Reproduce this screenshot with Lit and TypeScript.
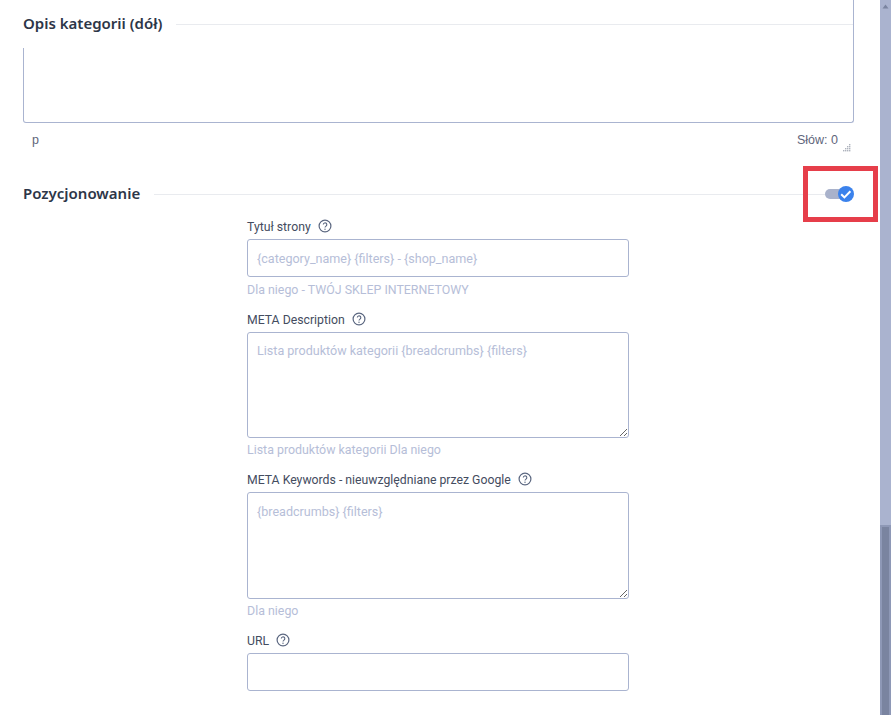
import { LitElement, html, css, svg } from "lit";
import { customElement } from "lit/decorators.js";

const help = html`<svg class="help" viewBox="0 0 14 14" width="14" height="14" aria-hidden="true">
  <circle cx="7" cy="7" r="5.9" fill="none" stroke="#5b6780" stroke-width="1.2"></circle>
  <path d="M5.3 5.6a1.75 1.75 0 1 1 2.7 1.5c-.6.4-1 .7-1 1.4" fill="none" stroke="#5b6780" stroke-width="1.1"></path>
  <circle cx="7" cy="10.2" r=".7" fill="#5b6780"></circle>
</svg>`;

@customElement("app-root")
export class AppRoot extends LitElement {
  static styles = css`
    :host {
      display: flex;
      width: 891px;
      height: 715px;
      overflow: hidden;
      position: relative;
      background: #fff;
      font-family: Roboto, "Noto Sans", sans-serif;
      color: #3d4559;
    }
    * { box-sizing: border-box; }
    .main {
      flex: 1;
      min-width: 0;
      padding: 0 26px 0 23px;
      display: flex;
      flex-direction: column;
      position: relative;
    }
    .rail {
      position: absolute;
      top: 0;
      right: 26px;
      width: 1px;
      height: 48px;
      background: #aab4d0;
    }
    .head {
      display: flex;
      align-items: center;
      gap: 14px;
      height: 20px;
      font-family: "Noto Sans", sans-serif;
      font-size: 15px;
      font-weight: 600;
      line-height: 18px;
      color: #2d3648;
      white-space: nowrap;
    }
    .head span { position: relative; top: -1px; }
    .head::after {
      content: "";
      flex: 1;
      height: 1px;
      background: #e9ebef;
    }
    .head.first { margin-top: 14px; }
    .editor {
      margin-top: 14px;
      height: 75px;
      border: 1px solid #aab4d0;
      border-top: none;
      border-radius: 0 0 3px 3px;
      background: #fff;
    }
    .status {
      display: flex;
      justify-content: space-between;
      align-items: flex-start;
      height: 61px;
      padding: 9px 3px 0 9px;
      font-family: "Liberation Sans", Arial, sans-serif;
      font-size: 12.5px;
      line-height: 16px;
      color: #5f667c;
    }
    .count { display: flex; gap: 4px; }
    .grip { margin-top: 12px; }
    .form {
      margin: 15px 0 0 224px;
      width: 382px;
      display: flex;
      flex-direction: column;
      gap: 14px;
    }
    .field { display: flex; flex-direction: column; }
    .label {
      display: flex;
      align-items: center;
      gap: 7px;
      height: 16px;
      margin-bottom: 4px;
      font-size: 12.25px;
      line-height: 16px;
      color: #444c60;
      white-space: nowrap;
    }
    .help { flex: none; position: relative; top: -1px; }
    input, textarea {
      display: block;
      width: 100%;
      border: 1px solid #aab4d0;
      border-radius: 3px;
      padding: 0 9px;
      font: inherit;
      font-size: 12.55px;
      color: #3d4559;
      background: #fff;
      outline: none;
    }
    input { height: 38px; }
    textarea { padding-top: 10px; line-height: 16px; }
    textarea.a { height: 106px; }
    textarea.b { height: 107px; padding-top: 11px; }
    ::placeholder { color: #b6bed8; opacity: 1; }
    .hint {
      height: 16px;
      margin-top: 4px;
      line-height: 16px;
      font-size: 12.4px;
      color: #b6bed8;
    }
    input + .hint { margin-top: 5px; }
    .scrollbar {
      flex: none;
      width: 11px;
      height: 100%;
      background: #aab3cf;
      position: relative;
      display: flex;
      flex-direction: column;
      align-items: center;
    }
    .arrow { margin-top: 4px; }
    .thumb {
      margin-top: auto;
      width: 7px;
      height: 188px;
      background: #7a84a0;
      box-shadow: 0 0 0 2px #8e98b6;
    }
    .marker {
      position: absolute;
      left: 803px;
      top: 166px;
      width: 75px;
      height: 56px;
      border: 5px solid #e63e4a;
      display: flex;
      align-items: center;
      justify-content: center;
      padding-right: 1px;
    }
  `;

  render() {
    return html`
      <div class="main">
        <div class="rail"></div>
        <div class="head first"><span>Opis kategorii (dół)</span></div>
        <div class="editor"></div>
        <div class="status">
          <span>p</span>
          <span class="count">Słów: 0
            <svg class="grip" width="9" height="8" viewBox="0 0 9 8" aria-hidden="true">
              ${[[7,0],[5,2],[7,2],[3,4],[5,4],[7,4],[1,6],[3,6],[5,6],[7,6]].map(([x,y]) => svg`<rect x=${x} y=${y} width="1.4" height="1.4" fill="#aeb3bd"></rect>`)}
            </svg>
          </span>
        </div>
        <div class="head"><span>Pozycjonowanie</span></div>
        <div class="form">
          <div class="field">
            <div class="label"><span>Tytuł strony</span> ${help}</div>
            <input placeholder="{category_name} {filters} - {shop_name}" />
            <div class="hint">Dla niego - TWÓJ SKLEP INTERNETOWY</div>
          </div>
          <div class="field">
            <div class="label"><span>META Description</span> ${help}</div>
            <textarea class="a" placeholder="Lista produktów kategorii {breadcrumbs} {filters}"></textarea>
            <div class="hint">Lista produktów kategorii Dla niego</div>
          </div>
          <div class="field">
            <div class="label"><span>META Keywords - nieuwzględniane przez Google</span> ${help}</div>
            <textarea class="b" placeholder="{breadcrumbs} {filters}"></textarea>
            <div class="hint">Dla niego</div>
          </div>
          <div class="field">
            <div class="label"><span>URL</span> ${help}</div>
            <input />
          </div>
        </div>
      </div>
      <div class="scrollbar">
        <svg class="arrow" width="7" height="5" viewBox="0 0 7 5" aria-hidden="true"><path d="M3.5 0.5 6.5 4.5H.5Z" fill="#7a84a0"></path></svg>
        <div class="thumb"></div>
      </div>
      <div class="marker">
        <svg width="30" height="18" viewBox="0 0 30 18" aria-hidden="true">
          <rect x="0" y="4" width="22" height="10" rx="5" fill="#a9b2cb"></rect>
          <circle cx="21" cy="9" r="8" fill="#3b82ec"></circle>
          <path d="M16.2 9.2l3.2 3.2 6-6.2" fill="none" stroke="#fff" stroke-width="2"></path>
        </svg>
      </div>
    `;
  }
}
